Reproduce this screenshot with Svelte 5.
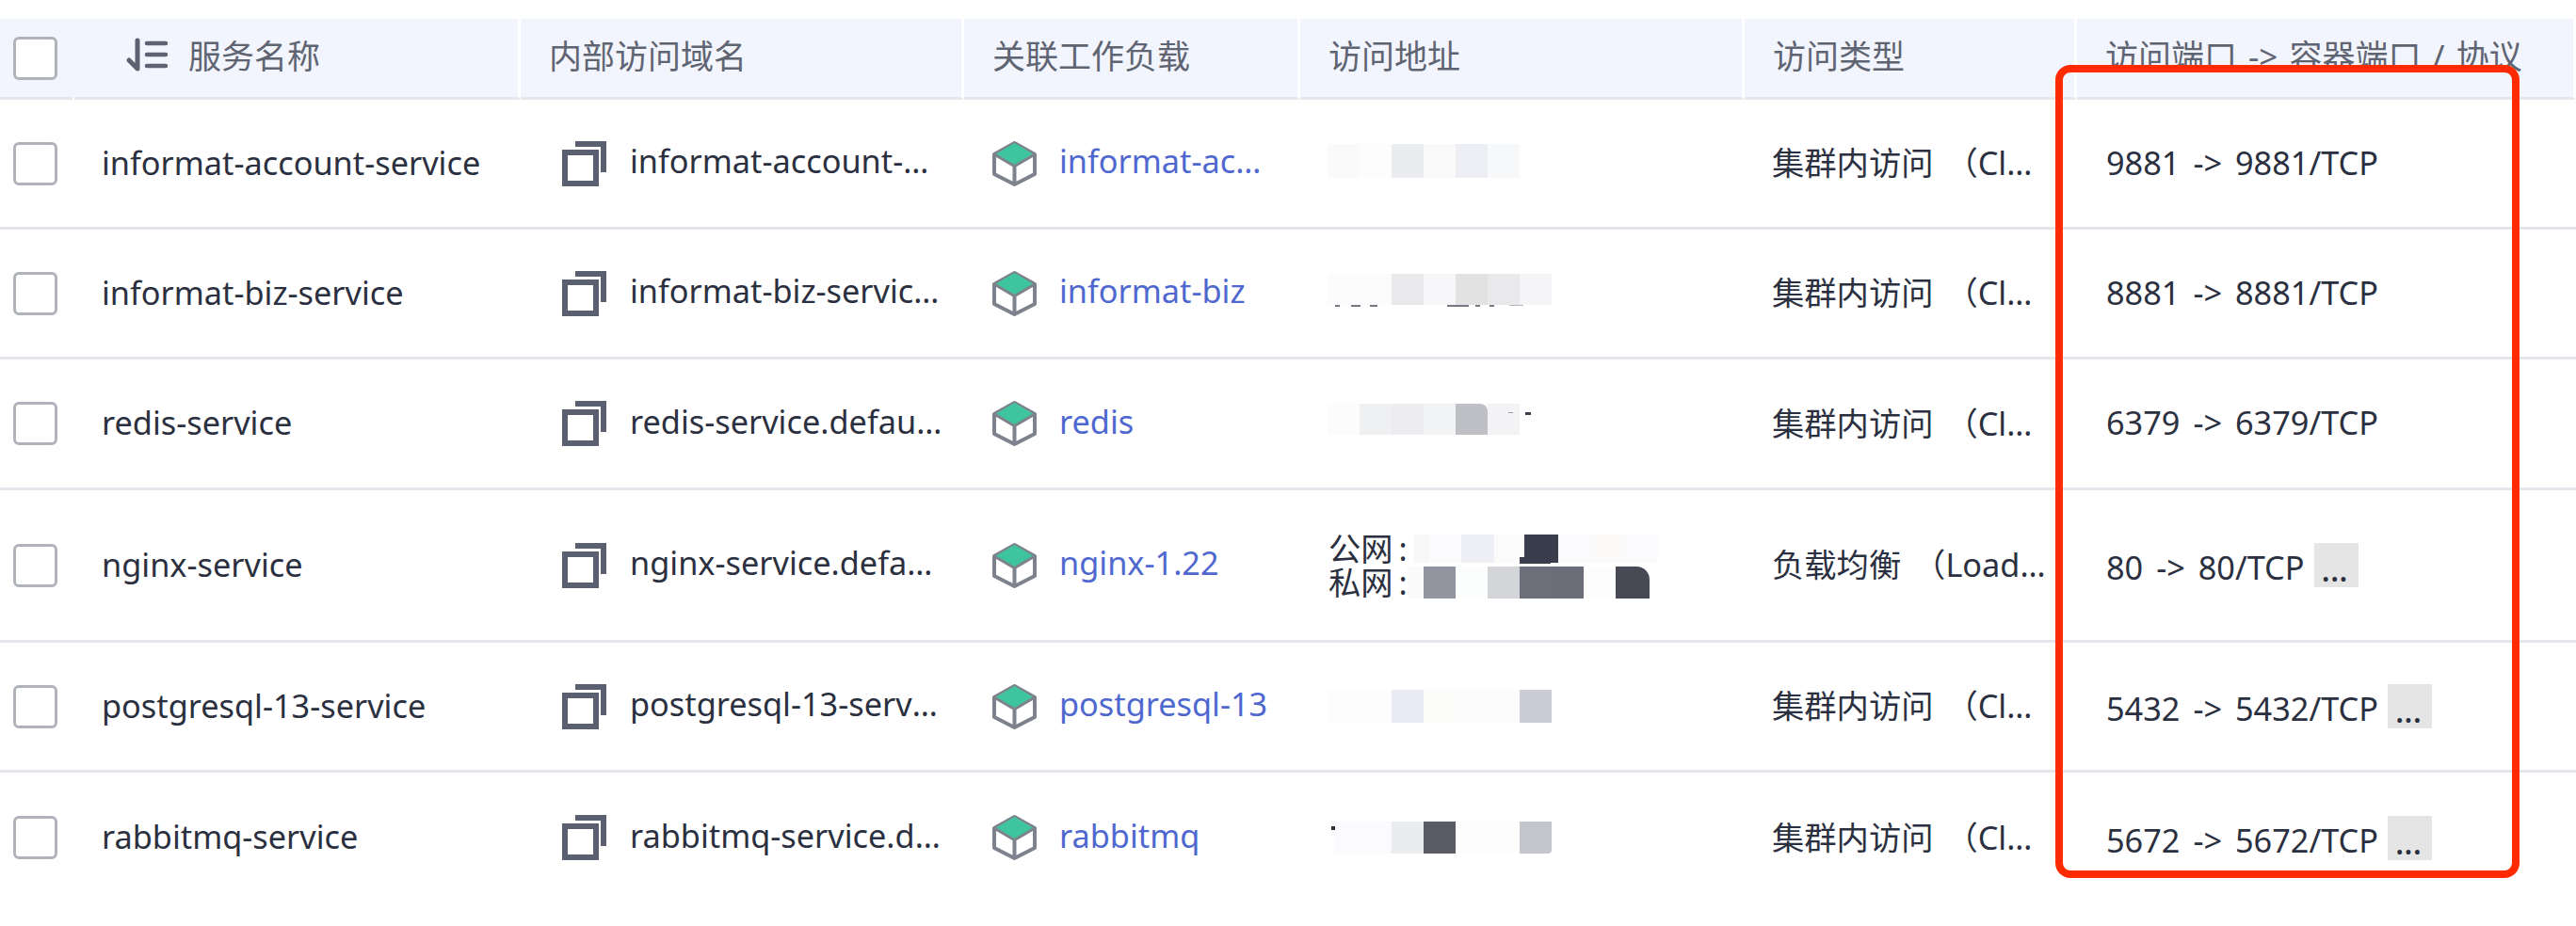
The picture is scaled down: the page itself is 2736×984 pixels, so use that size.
<script>
  const c = (w, color, radius = 0) => [w, color, radius];
  const rows = [
    {
      name: "informat-account-service",
      host: "informat-account-service.default.svc.cluster.local",
      load: "informat-account-service",
      kind: "集群内访问 （ClusterIP）",
      port: "9881 -> 9881/TCP",
      more: false,
      height: 138,
      addr: [{ h: 36, lift: 6, cells: [c(34, "#fafafa"), c(34, "#fdfdfd"), c(34, "#ebecf0"), c(34, "#fbfafa"), c(34, "#ededf4"), c(34, "#f7f8fa"), c(20, "#fefefe")] }],
    },
    {
      name: "informat-biz-service",
      host: "informat-biz-service.default.svc.cluster.local",
      load: "informat-biz",
      kind: "集群内访问 （ClusterIP）",
      port: "8881 -> 8881/TCP",
      more: false,
      height: 138,
      addr: [{
        h: 33, lift: 8,
        cells: [c(68, "#fcfcfd"), c(34, "#e9e9eb"), c(34, "#f7f7fa"), c(34, "#e2e2e3"), c(34, "#e9e9eb"), c(34, "#f5f5f8")],
        specks: [[8, 33, 5, 2, "#777a85"], [25, 33, 10, 2, "#777a85"], [45, 33, 8, 2, "#777a85"], [127, 33, 23, 2, "#777a85"], [157, 33, 5, 2, "#777a85"], [172, 33, 5, 2, "#777a85"], [193, 33, 15, 1, "#b5b7be"]],
      }],
    },
    {
      name: "redis-service",
      host: "redis-service.default.svc.cluster.local",
      load: "redis",
      kind: "集群内访问 （ClusterIP）",
      port: "6379 -> 6379/TCP",
      more: false,
      height: 139,
      addr: [{
        h: 33, lift: 10,
        cells: [c(34, "#fcfcfd"), c(34, "#eff0f1"), c(34, "#ededf1"), c(34, "#f2f3f5"), c(34, "#bfc0c6", "0 8px 0 0"), c(34, "#f3f3f6")],
        specks: [[192, 9, 5, 1, "#9a9ca5"], [210, 9, 6, 3, "#3a3e4c"]],
      }],
    },
    {
      name: "nginx-service",
      host: "nginx-service.default.svc.cluster.local",
      load: "nginx-1.22",
      kind: "负载均衡 （LoadBalancer）",
      port: "80 -> 80/TCP",
      more: true,
      height: 162,
      lines: [
        {
          label: "公网",
          offset: 7,
          h: 30,
          cells: [c(16, "#f8f8f8"), c(34, "#fbfbfd"), c(35, "#eeeef5"), c(32, "#fbfbfb"), c(36, "#3a3e4c"), c(35, "#fbfbfd"), c(36, "#fbfaf8"), c(35, "#fbfbfd")],
          specks: [[112, 24, 33, 7, "#3a3e4c"]],
        },
        {
          label: "私网",
          offset: 0,
          h: 34,
          cells: [c(17, "#fafafa"), c(34, "#92959f"), c(34, "#fcfdfd"), c(34, "#d4d5d8"), c(34, "#6d707a"), c(34, "#6b6e78"), c(34, "#fdfdfd"), c(36, "#474a55", "0 14px 0 0")],
        },
      ],
    },
    {
      name: "postgresql-13-service",
      host: "postgresql-13-service.default.svc.cluster.local",
      load: "postgresql-13",
      kind: "集群内访问 （ClusterIP）",
      port: "5432 -> 5432/TCP",
      more: true,
      height: 138,
      addr: [{ h: 35, lift: 0, cells: [c(68, "#fdfdfe"), c(34, "#e9eaf3"), c(34, "#fbfbfa"), c(68, "#fcfcfc"), c(34, "#cbcdd6")] }],
    },
    {
      name: "rabbitmq-service",
      host: "rabbitmq-service.default.svc.cluster.local",
      load: "rabbitmq",
      kind: "集群内访问 （ClusterIP）",
      port: "5672 -> 5672/TCP",
      more: true,
      height: 138,
      addr: [{
        h: 34, lift: 0,
        cells: [c(7, "#ffffff"), c(61, "#fbfbfd"), c(34, "#ebecf0"), c(34, "#5a5b64"), c(68, "#fdfdfe"), c(34, "#c5c6cb", "0 0 4px 0")],
        specks: [[4, 5, 4, 4, "#2a2d3a"]],
      }],
    },
  ];
</script>

{#snippet mosaic(m)}
  <div class="mosaic" style={`height:${m.h}px;margin-bottom:${m.lift ?? 0}px;margin-left:${m.offset ?? 0}px`}>
    {#each m.cells as [w, color, radius]}
      <i style={`width:${w}px;background:${color};border-radius:${radius}`}></i>
    {/each}
    {#each m.specks ?? [] as [l, t, w, h, color]}
      <b style={`left:${l}px;top:${t}px;width:${w}px;height:${h}px;background:${color}`}></b>
    {/each}
  </div>
{/snippet}

<div class="page">
  <table>
    <colgroup>
      <col style="width:79px" />
      <col style="width:474px" />
      <col style="width:471px" />
      <col style="width:357px" />
      <col style="width:472px" />
      <col style="width:353px" />
      <col style="width:530px" />
    </colgroup>
    <thead>
      <tr>
        <th class="check"><span class="box"></span></th>
        <th class="sort">
          <div class="head-name">
            <svg width="46" height="36" viewBox="0 0 46 36" fill="none" stroke="#5c6272" stroke-linecap="round" stroke-linejoin="round">
              <path d="M13 3V33L4 24" stroke-width="5" />
              <path d="M23 6H43M23 18H43M23 30H43" stroke-width="4.5" />
            </svg>
            <span>服务名称</span>
          </div>
        </th>
        <th>内部访问域名</th>
        <th>关联工作负载</th>
        <th>访问地址</th>
        <th>访问类型</th>
        <th class="ports">访问端口 -> 容器端口 / 协议</th>
      </tr>
    </thead>
    <tbody>
      {#each rows as row}
        <tr style={`height:${row.height}px`}>
          <td class="check"><span class="box"></span></td>
          <td class="name">{row.name}</td>
          <td class="host">
            <div class="with-icon">
              <svg width="47" height="48" viewBox="0 0 47 48" fill="none" stroke="#5b6070" stroke-width="6">
                <rect x="3" y="12" width="33" height="33" />
                <path d="M14 3H44V33" />
              </svg>
              <span class="clip host-text">{row.host}</span>
            </div>
          </td>
          <td class="load">
            <div class="with-icon">
              <svg width="47" height="48" viewBox="0 0 47 48" fill="none" stroke="#7e828c" stroke-width="4" stroke-linejoin="round">
                <path d="M23.5 2L45 14V35L23.5 46L2 35V14Z" />
                <path d="M3 14L23.5 26L44 14M23.5 26V46" />
                <path d="M23.5 2L43 13.5L23.5 25L4 13.5Z" fill="#3ec59d" stroke="none" />
              </svg>
              <a class="clip load-text" href="#top">{row.load}</a>
            </div>
          </td>
          <td class="addr">
            {#if row.lines}
              {#each row.lines as line}
                <div class="addr-line">
                  <span class="addr-label">{line.label}<span class="colon">:</span></span>
                  {@render mosaic(line)}
                </div>
              {/each}
            {:else}
              {#each row.addr as m}
                {@render mosaic(m)}
              {/each}
            {/if}
          </td>
          <td class="kind"><span class="clip kind-text">{row.kind}</span></td>
          <td class="port">
            <div class="port-line" class:has-more={row.more}>
              <span class="port-text">{row.port}</span>
              {#if row.more}<span class="more">...</span>{/if}
            </div>
          </td>
        </tr>
      {/each}
    </tbody>
  </table>
  <div class="callout"></div>
</div>

<style>
  :global(body) {
    background: #fff;
  }
  .page {
    position: relative;
    height: 984px;
    padding-top: 20px;
    box-sizing: border-box;
    overflow: hidden;
    font-family: "Noto Sans", "Noto Sans CJK SC", sans-serif;
    font-size: 34.3px;
    color: #2b3040;
  }
  table {
    width: 2736px;
    table-layout: fixed;
    border-collapse: separate;
    border-spacing: 0;
  }
  th {
    position: relative;
    height: 86px;
    box-sizing: border-box;
    padding: 0 0 8px 30px;
    background: #f2f5fd;
    border-bottom: 3px solid #e5e7ec;
    border-right: 3px solid #fff;
    font-size: 35px;
    font-weight: 400;
    text-align: left;
    color: #5f6472;
    white-space: nowrap;
  }
  th.check {
    border-right: 0;
    padding: 0 0 0 14px;
  }
  th.check::after {
    content: "";
    position: absolute;
    right: 0;
    bottom: -3px;
    width: 2px;
    height: 3px;
    background: #fff;
  }
  th.sort {
    padding-left: 54px;
  }
  th.ports {
    word-spacing: 3px;
  }
  td {
    box-sizing: border-box;
    padding: 0 0 0 31px;
    border-bottom: 3px solid #e5e6eb;
    white-space: nowrap;
  }
  tbody tr:last-child td {
    border-bottom: 0;
  }
  td.check {
    padding-left: 14px;
  }
  td.name {
    padding: 0 0 3px 29px;
  }
  td.host {
    padding-left: 44px;
  }
  td.load {
    padding-left: 30px;
  }
  td.addr {
    padding-left: 29px;
  }
  td.kind {
    padding-left: 29px;
  }
  .box {
    display: block;
    width: 47px;
    height: 46px;
    box-sizing: border-box;
    background: #fff;
    border: 3px solid #b0b3bc;
    border-radius: 6px;
  }
  .head-name {
    display: flex;
    align-items: center;
    gap: 21px;
  }
  .with-icon {
    display: flex;
    align-items: center;
    gap: 25px;
  }
  .with-icon svg {
    flex: none;
  }
  .load .with-icon {
    gap: 24px;
  }
  .clip {
    display: block;
    overflow: hidden;
    text-overflow: ellipsis;
    padding-bottom: 6px;
  }
  .host-text {
    width: 332px;
  }
  .load-text {
    width: 224px;
    color: #4f68cf;
    text-decoration: none;
  }
  .kind-text {
    width: 293px;
    padding-bottom: 5px;
    word-spacing: 4px;
  }
  .mosaic {
    position: relative;
    display: flex;
    width: max-content;
  }
  .mosaic i {
    display: block;
    height: 100%;
  }
  .mosaic b {
    position: absolute;
    display: block;
  }
  .addr-line {
    display: flex;
    align-items: center;
    height: 36px;
  }
  .addr-label {
    width: 84px;
    flex: none;
    margin-left: 1px;
    line-height: 36px;
  }
  .colon {
    margin-left: 6px;
  }
  .port-line {
    display: flex;
    align-items: center;
    gap: 10px;
    padding-bottom: 3px;
  }
  .port-text {
    word-spacing: 5px;
  }
  .has-more {
    padding-bottom: 0;
  }
  .has-more .port-text {
    margin-top: 4px;
  }
  .more {
    width: 47px;
    height: 47px;
    box-sizing: border-box;
    padding-left: 8px;
    background: #e5e5e5;
    line-height: 55px;
    font-weight: 500;
  }
  .callout {
    position: absolute;
    left: 2183px;
    top: 69px;
    width: 493px;
    height: 864px;
    box-sizing: border-box;
    border: 8px solid #ff2a00;
    border-radius: 16px;
  }
</style>
